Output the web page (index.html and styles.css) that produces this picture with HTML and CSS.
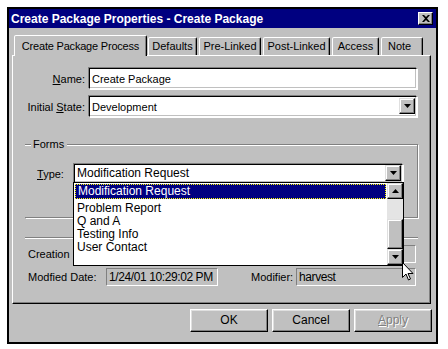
FILE: index.html
```html
<!doctype html>
<html lang="en">
  <head>
    <meta charset="UTF-8" />
    <title>Create Package Properties - Create Package</title>
    <link rel="stylesheet" href="styles.css">
  </head>
  <body>
    <div class="dialog">
      <!-- Title bar -->
      <div class="titlebar">
        <span class="title">Create Package Properties - Create Package</span>
        <span class="close-btn">
          <svg width="8" height="7" viewBox="0 0 8 7"><path d="M0 0h2l2 2 2-2h2L5 3.5 8 7H6L4 5 2 7H0l3-3.5z" fill="#000"/></svg>
        </span>
      </div>

      <!-- Tabs -->
      <div class="tabs">
        <div class="tab active">Create Package Process</div>
        <div class="tab t-defaults">Defaults</div>
        <div class="tab t-pre">Pre-Linked</div>
        <div class="tab t-post">Post-Linked</div>
        <div class="tab t-access">Access</div>
        <div class="tab t-note">Note</div>
      </div>

      <!-- Tab page -->
      <div class="panel">
        <div class="row">
          <label class="lbl"><u>N</u>ame:</label>
          <div class="input">Create Package</div>
        </div>
        <div class="row">
          <label class="lbl">Initial <u>S</u>tate:</label>
          <div class="input combo">
            <span>Development</span>
            <span class="drop-btn"><svg width="7" height="4" viewBox="0 0 7 4"><path d="M0 0h7L3.5 4z" fill="#000"/></svg></span>
          </div>
        </div>

        <div class="group">
          <div class="group-title"><span>Forms</span></div>
          <div class="type-row">
            <label class="type-lbl"><u>T</u>ype:</label>
            <div class="type-box">
              <div class="input combo type-combo">
                <span>Modification Request</span>
                <span class="drop-btn"><svg width="7" height="4" viewBox="0 0 7 4"><path d="M0 0h7L3.5 4z" fill="#000"/></svg></span>
              </div>
              <!-- open drop-down list -->
              <div class="droplist">
                <div class="items">
                  <div class="item selected">Modification Request</div>
                  <div class="item">Problem Report</div>
                  <div class="item">Q and A</div>
                  <div class="item">Testing Info</div>
                  <div class="item">User Contact</div>
                </div>
                <div class="scrollbar">
                  <span class="sb-btn"><svg width="7" height="4" viewBox="0 0 7 4"><path d="M0 4h7L3.5 0z" fill="#000"/></svg></span>
                  <span class="sb-track"></span>
                  <span class="sb-thumb"></span>
                  <span class="sb-btn"><svg width="7" height="4" viewBox="0 0 7 4"><path d="M0 0h7L3.5 4z" fill="#000"/></svg></span>
                </div>
              </div>
            </div>
          </div>
        </div>

        <div class="sep"></div>

        <div class="info-row">
          <span class="info-lbl">Creation Date:</span>
          <span class="field"></span>
          <span class="info-lbl2">Creator:</span>
          <span class="field wide"></span>
        </div>
        <div class="info-row">
          <span class="info-lbl">Modfied Date:</span>
          <span class="field">1/24/01 10:29:02 PM</span>
          <span class="info-lbl2">Modifier:</span>
          <span class="field wide">harvest</span>
        </div>
      </div>

      <!-- Buttons -->
      <div class="buttons">
        <div class="btn">OK</div>
        <div class="btn">Cancel</div>
        <div class="btn disabled"><u>A</u>pply</div>
      </div>

      <!-- mouse pointer -->
      <svg class="cursor" width="12" height="20" viewBox="0 0 12 20">
        <path d="M0.5 0.5v15l3.5-3.5 2.5 6 2-1-2.5-5.5h5z" fill="#fff" stroke="#000" stroke-width="1"/>
      </svg>
    </div>
  </body>
</html>
```

FILE: styles.css
```css
* {
  margin: 0;
  padding: 0;
  box-sizing: border-box;
}

body {
  background: #fff;
  padding: 7px 0 0 7px;
  font-family: "Liberation Sans", Arial, sans-serif;
  font-size: 11px;
  color: #000;
  white-space: nowrap;
}

u {
  text-decoration: underline;
}

/* Dialog window */
.dialog {
  position: relative;
  width: 431px;
  height: 337px;
  background: #c0c0c0;
  border: 2px solid #000;
}

.titlebar {
  height: 19px;
  background: #000080;
  display: flex;
  align-items: center;
  justify-content: space-between;
  padding: 0 3px 0 2px;
}

.title {
  color: #fff;
  font-weight: 700;
  font-size: 12px;
}

.close-btn {
  width: 15px;
  height: 13px;
  background: #c0c0c0;
  border: 1px solid;
  border-color: #fff #000 #000 #fff;
  box-shadow: inset -1px -1px #808080;
  display: flex;
  align-items: center;
  justify-content: center;
}

/* Tabs */
.tabs {
  display: flex;
  align-items: flex-end;
  height: 27px;
  padding-left: 5px;
  position: relative;
  z-index: 1;
}

.tab {
  height: 18px;
  margin-right: 2px;
  border: 1px solid;
  border-bottom: none;
  border-color: #fff #000 transparent #fff;
  box-shadow: inset -1px 0 #808080;
  border-radius: 2px 2px 0 0;
  line-height: 17px;
  text-align: center;
  background: #c0c0c0;
}

.tab.active {
  width: 133px;
  height: 21px;
  margin-right: 1px;
  margin-bottom: -1px;
  line-height: 21px;
  letter-spacing: -0.2px;
}

.t-defaults { width: 49px; }
.t-pre { width: 62px; }
.t-post { width: 67px; }
.t-access { width: 47px; }
.t-note { width: 42px; text-align: left; padding-left: 6px; }

/* Tab page */
.panel {
  margin-left: 3px;
  width: 419px;
  height: 249px;
  border: 1px solid;
  border-color: #fff #000 #000 #fff;
  box-shadow: inset -1px -1px #808080;
  padding-top: 12px;
}

.row {
  display: flex;
  align-items: center;
  margin-bottom: 7px;
}

.lbl {
  width: 73px;
  text-align: right;
  padding-right: 1px;
  margin-right: 3px;
}

.input {
  width: 328px;
  height: 21px;
  background: #fff;
  border: 1px solid;
  border-color: #000 #fff #fff #000;
  box-shadow: inset -1px -1px #c0c0c0, 1px 1px #fff, -1px -1px #808080;
  padding: 2px 2px 0;
  line-height: 16px;
}

.combo {
  display: flex;
  justify-content: space-between;
  padding-right: 1px;
}

.drop-btn {
  width: 16px;
  height: 16px;
  margin-top: -1px;
  background: #c0c0c0;
  border: 1px solid;
  border-color: #dfdfdf #000 #000 #dfdfdf;
  box-shadow: inset -1px -1px #808080, inset 1px 1px #fff;
  display: flex;
  align-items: center;
  justify-content: center;
}

/* Forms group */
.group {
  margin: 27px 0 0 12px;
  width: 393px;
  height: 74px;
  border-right: 1px solid #808080;
  border-bottom: 1px solid #808080;
  box-shadow: 1px 1px #fff;
}

.group-title {
  height: 1px;
  border-top: 1px solid #808080;
  box-shadow: 0 1px #fff;
  position: relative;
}

.group-title span {
  position: absolute;
  left: 6px;
  top: -7px;
  padding: 0 3px 0 2px;
  background: #c0c0c0;
}

.type-row {
  display: flex;
  align-items: center;
  margin-top: 19px;
  padding-left: 12px;
}

.type-lbl {
  width: 37px;
}

.type-box {
  position: relative;
}

.type-combo {
  width: 329px;
  height: 19px;
  line-height: 14px;
  font-size: 12px;
  padding-top: 1px;
}

/* Open list */
.droplist {
  position: absolute;
  left: -1px;
  top: 18px;
  width: 331px;
  height: 84px;
  background: #fff;
  border: 1px solid #000;
  display: flex;
  font-size: 12px;
  z-index: 2;
}

.items {
  flex: 1;
}

.item {
  height: 13px;
  line-height: 13px;
  padding-left: 3px;
}

.item.selected {
  height: 15px;
  line-height: 13px;
  margin: 1px 1px 3px 1px;
  padding-left: 2px;
  background: #000080;
  color: #fff;
  border: 1px dotted #ff0;
}

.scrollbar {
  width: 16px;
  display: flex;
  flex-direction: column;
}

.sb-btn {
  height: 16px;
  background: #c0c0c0;
  border: 1px solid;
  border-color: #dfdfdf #000 #000 #dfdfdf;
  box-shadow: inset -1px -1px #808080, inset 1px 1px #fff;
  display: flex;
  align-items: center;
  justify-content: center;
}

.sb-track {
  height: 20px;
  background: #e4e4e4;
}

.sb-thumb {
  flex: 1;
  background: #c0c0c0;
  border: 1px solid;
  border-color: #dfdfdf #000 #000 #dfdfdf;
  box-shadow: inset -1px -1px #808080, inset 1px 1px #fff;
}

.sep {
  margin: 19px 0 0 12px;
  width: 393px;
  height: 2px;
  border-top: 1px solid #808080;
  border-bottom: 1px solid #fff;
}

/* Read-only info rows */
.info-row {
  display: flex;
  align-items: center;
  margin-top: 6px;
  padding-left: 15px;
}

.info-row + .info-row {
  margin-top: 5px;
}

.info-lbl {
  width: 78px;
}

.field {
  width: 112px;
  height: 18px;
  border: 1px solid;
  border-color: #808080 #fff #fff #808080;
  padding: 1px 2px 0;
  line-height: 15px;
  font-size: 12px;
  letter-spacing: -0.4px;
  overflow: hidden;
}

.info-lbl2 {
  margin-left: 33px;
  width: 45px;
}

.field.wide {
  width: 120px;
}

/* Buttons */
.buttons {
  display: flex;
  justify-content: flex-end;
  gap: 4px;
  padding: 5px 4px 0 0;
}

.btn {
  width: 78px;
  height: 23px;
  border: 1px solid;
  border-color: #fff #000 #000 #fff;
  box-shadow: inset -1px -1px #808080, inset 1px 1px #dfdfdf;
  text-align: center;
  line-height: 21px;
  font-size: 12px;
}

.btn.disabled {
  color: #808080;
  text-shadow: 1px 1px #fff;
}

.cursor {
  position: absolute;
  left: 393px;
  top: 253px;
  z-index: 3;
}
```
